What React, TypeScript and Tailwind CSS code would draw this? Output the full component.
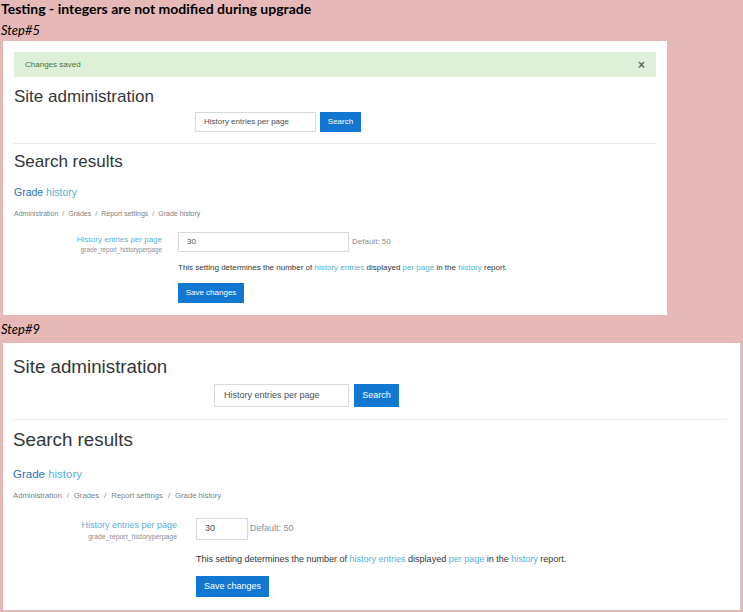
const sans = { fontFamily: '"Liberation Sans", Arial, sans-serif' };

type Size = {
  panel: string;
  heading: string;
  form: string;
  input: string;
  button: string;
  hr: string;
  results: string;
  grade: string;
  crumbs: string;
  sep: string;
  row: string;
  labelCol: string;
  label: string;
  sub: string;
  value: string;
  def: string;
  desc: string;
  save: string;
};

const step5: Size = {
  panel: "w-[664px] ml-[3px] mt-[2px] px-[11px] pt-[11px] pb-[12px]",
  heading: "mt-[10px] text-[17px] leading-[20px]",
  form: "mt-[5px] ml-[181px]",
  input: "w-[121px] h-[20px] text-[8px] pl-[8px]",
  button: "w-[41px] h-[20px] ml-[4px] text-[8px]",
  hr: "mt-[11px]",
  results: "mt-[8px] text-[17px] leading-[20px]",
  grade: "mt-[14px] text-[10.5px] leading-[13px]",
  crumbs: "mt-[10px] text-[7px] leading-[9px]",
  sep: "mx-[4px]",
  row: "mt-[14px]",
  labelCol: "w-[148px] mr-[16px] pt-[2px]",
  label: "text-[8px] leading-[11px]",
  sub: "text-[6.3px] leading-[9px]",
  value: "w-[171px] h-[20px] text-[8px] pl-[8px]",
  def: "ml-[3px] text-[8px]",
  desc: "mt-[10px] text-[8px] leading-[12px]",
  save: "mt-[9px] w-[66px] h-[20px] text-[8px]",
};

const step9: Size = {
  panel: "w-[738px] ml-[3px] mt-[5px] pl-[10px] pr-[13px] pt-[13px] pb-[13px] border-r border-[#d6c9c9]",
  heading: "text-[18.75px] leading-[22px]",
  form: "mt-[6px] ml-[201px]",
  input: "w-[135px] h-[23px] text-[9px] pl-[9px]",
  button: "w-[45px] h-[23px] ml-[5px] text-[9px]",
  hr: "mt-[12px]",
  results: "mt-[9px] text-[18.75px] leading-[22px]",
  grade: "mt-[16px] text-[11.5px] leading-[14px]",
  crumbs: "mt-[10px] text-[7.7px] leading-[10px]",
  sep: "mx-[5px]",
  row: "mt-[17px]",
  labelCol: "w-[164px] mr-[19px] pt-[1px]",
  label: "text-[9px] leading-[13px]",
  sub: "text-[6.9px] leading-[10px]",
  value: "w-[52px] h-[22px] text-[9px] pl-[8px]",
  def: "ml-[2px] text-[9px]",
  desc: "mt-[13px] text-[9px] leading-[13px]",
  save: "mt-[10px] w-[73px] h-[21px] text-[9px]",
};

function Link({ children }: { children: React.ReactNode }) {
  return <span className="text-[#56b1d9]">{children}</span>;
}

function Panel({ s, saved }: { s: Size; saved?: boolean }) {
  return (
    <div className={`bg-white text-[#333638] ${s.panel}`} style={sans}>
      {saved && (
        <div className="flex h-[25px] items-center justify-between bg-[#dff0d8] pl-[11px] pr-[11px] text-[8px] text-[#3c763d]">
          <span>Changes saved</span>
          <span className="text-[12px] font-bold leading-none text-[#5a6a5a]">×</span>
        </div>
      )}
      <h2 className={s.heading}>Site administration</h2>
      <div className={`flex ${s.form}`}>
        <div className={`flex items-center border border-[#d5d9dd] text-[#495057] ${s.input}`}>
          History entries per page
        </div>
        <div className={`flex items-center justify-center bg-[#1177d1] text-white ${s.button}`}>
          Search
        </div>
      </div>
      <div className={`h-[1px] bg-[#e9e9e9] ${s.hr}`} />
      <h2 className={s.results}>Search results</h2>
      <h3 className={s.grade}>
        <span className="text-[#2a72b8]">Grade</span> <Link>history</Link>
      </h3>
      <div className={`text-[#7b7f83] ${s.crumbs}`}>
        Administration<span className={s.sep}>/</span>Grades<span className={s.sep}>/</span>Report
        settings<span className={s.sep}>/</span>Grade history
      </div>
      <div className={`flex ${s.row}`}>
        <div className={`flex shrink-0 flex-col items-end ${s.labelCol}`}>
          <div className={`text-[#56b1d9] ${s.label}`}>History entries per page</div>
          <div className={`text-[#868e96] ${s.sub}`}>grade_report_historyperpage</div>
        </div>
        <div className="flex flex-col items-start">
          <div className="flex items-center">
            <div className={`flex items-center border border-[#d5d9dd] text-[#495057] ${s.value}`}>30</div>
            <span className={`text-[#868e96] ${s.def}`}>Default: 50</span>
          </div>
          <p className={s.desc}>
            This setting determines the number of <Link>history entries</Link> displayed{" "}
            <Link>per page</Link> in the <Link>history</Link> report.
          </p>
          <div className={`flex items-center justify-center bg-[#1177d1] text-white ${s.save}`}>
            Save changes
          </div>
        </div>
      </div>
    </div>
  );
}

export default function App() {
  return (
    <div className="h-[612px] w-[743px] overflow-hidden bg-[#e6b8b8] text-black">
      <div
        className="pl-[1px] text-[14px] font-bold leading-[18px]"
        style={{ fontFamily: "Lato, 'Open Sans', sans-serif" }}
      >
        Testing - integers are not modified during upgrade
      </div>
      <div
        className="mt-[4px] pl-[1px] text-[13px] italic leading-[17px]"
        style={{ fontFamily: "Lato, 'Open Sans', sans-serif" }}
      >
        Step#5
      </div>
      <Panel s={step5} saved />
      <div
        className="mt-[6px] pl-[1px] text-[13px] italic leading-[17px]"
        style={{ fontFamily: "Lato, 'Open Sans', sans-serif" }}
      >
        Step#9
      </div>
      <Panel s={step9} />
    </div>
  );
}
